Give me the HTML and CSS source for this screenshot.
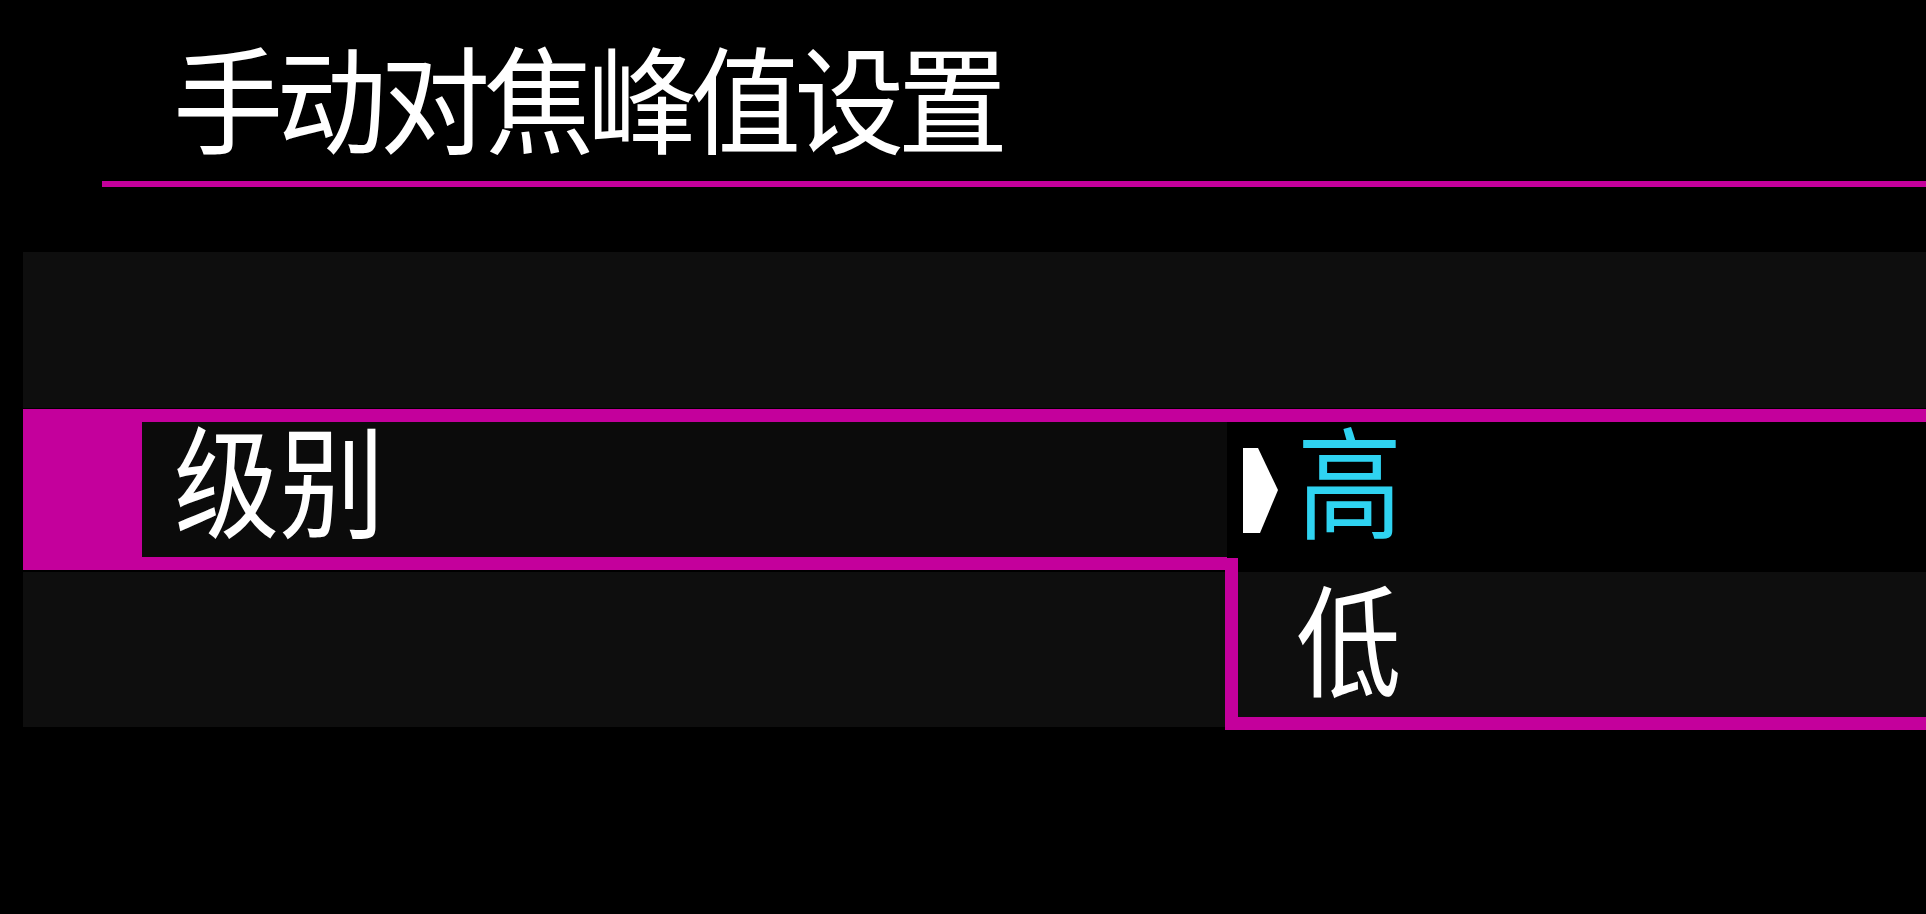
FILE: index.html
```html
<!DOCTYPE html>
<html lang="zh-CN">
<head>
<meta charset="utf-8">
<title>手动对焦峰值设置</title>
<link rel="stylesheet" href="styles.css">
</head>
<body>
<div class="screen">
  <header class="head">
    <h1 class="title">手动对焦峰值设置</h1>
  </header>
  <div class="rule"></div>
  <div class="menu">
    <div class="row"></div>
    <div class="row sel">
      <div class="sel-label"><span class="txt">级别</span></div>
    </div>
    <div class="row after"></div>
    <div class="popup">
      <div class="opt cur">
        <svg class="ptr" width="35" height="85" viewBox="0 0 35 85"><polygon points="0,0 15,0 35,42 17,85 0,85" fill="#fff"/></svg>
        <span class="txt cyan">高</span>
      </div>
      <div class="opt-lower">
        <div class="opt low"><span class="txt">低</span></div>
      </div>
    </div>
  </div>
</div>
</body>
</html>
```

FILE: styles.css
```css
html, body {
  margin: 0;
  padding: 0;
  background: #000;
}
body {
  width: 1926px;
  height: 914px;
  overflow: hidden;
  font-family: "Noto Sans CJK SC", "Noto Sans", sans-serif;
  color: #fff;
}
.screen {
  width: 1926px;
  height: 914px;
}
.head {
  height: 181px;
  box-sizing: border-box;
  padding-top: 36px;
  padding-left: 173px;
}
.title {
  margin: 0;
  font-size: 116px;
  line-height: 116px;
  font-weight: 400;
  letter-spacing: -7px;
  white-space: nowrap;
  transform: scaleX(0.95);
  transform-origin: left center;
}
.rule {
  margin-left: 102px;
  height: 6px;
  background: #c4009c;
}
.menu {
  position: relative;
  margin-top: 65px;
  margin-left: 23px;
}
.row {
  height: 156px;
  background: #0e0e0e;
}
.row.sel {
  margin-top: 1px;
  height: 161px;
  box-sizing: border-box;
  padding: 13px 0 13px 119px;
  background: #c4009c;
  display: flex;
}
.sel-label {
  width: 1085px;
  background: #0b0b0b;
  display: flex;
  align-items: center;
  padding-left: 32px;
  padding-bottom: 28px;
  box-sizing: border-box;
}
.row.after {
  margin-top: 2px;
  height: 155px;
}
.txt {
  display: inline-block;
  font-size: 121px;
  line-height: 121px;
  font-weight: 400;
  white-space: nowrap;
  transform: scaleX(0.87);
  transform-origin: left center;
}
.cyan {
  color: #2fd3f1;
}
.popup {
  position: absolute;
  top: 170px;
  left: 1202px;
  right: 0;
}
.opt {
  display: flex;
  align-items: center;
  box-sizing: border-box;
}
.opt.cur {
  margin-left: 2px;
  height: 136px;
  background: #000;
  padding-left: 16px;
}
.opt.cur .txt {
  margin-bottom: 28px;
}
.ptr {
  display: block;
  margin-right: 19px;
  flex: none;
}
.opt-lower {
  border-left: 13px solid #c4009c;
  border-bottom: 13px solid #c4009c;
  background: #000;
  padding-top: 14px;
}
.opt.low {
  height: 145px;
  background: #0e0e0e;
  padding-left: 58px;
  padding-bottom: 20px;
}
```
